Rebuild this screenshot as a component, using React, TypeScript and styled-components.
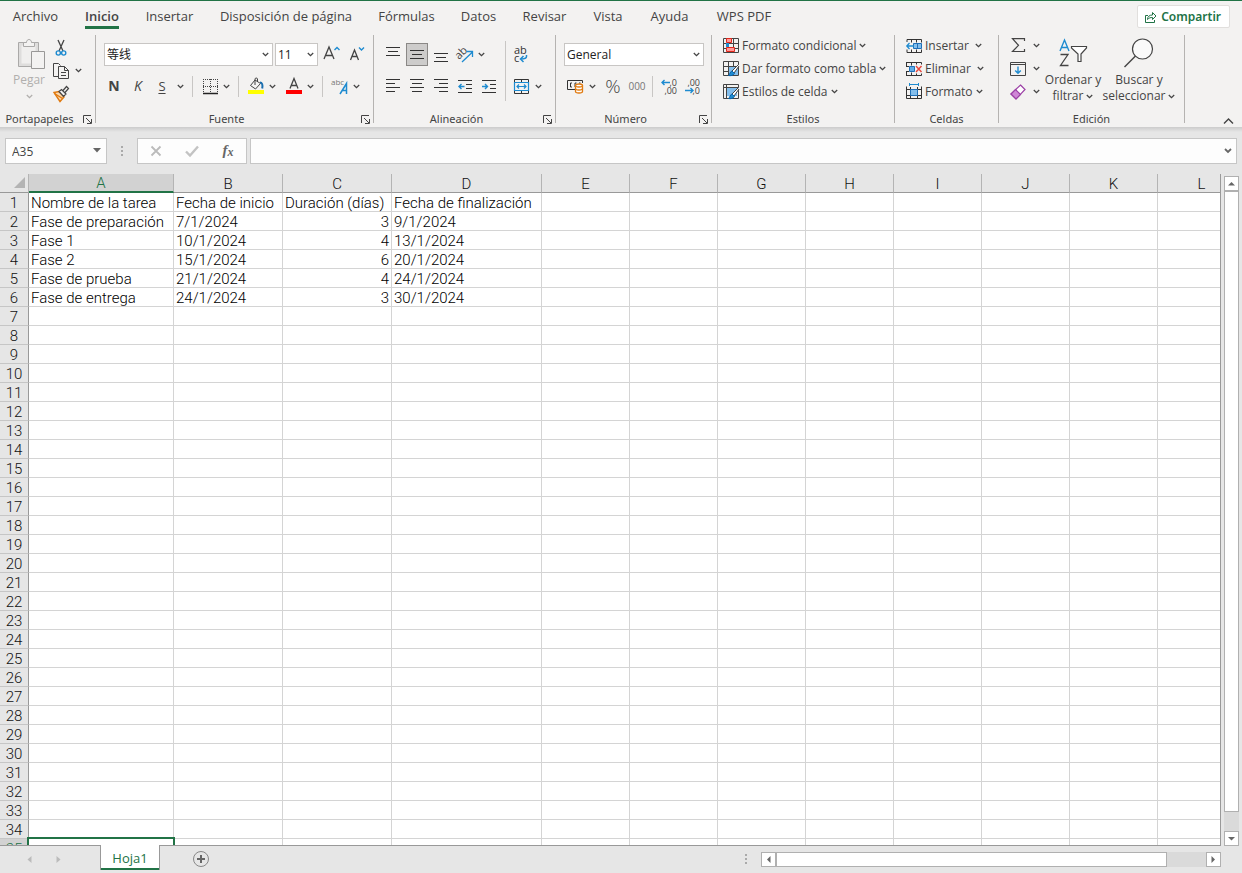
import React from 'react';
import styled, { createGlobalStyle, css } from 'styled-components';

const ui = '"Open Sans", "Noto Sans CJK SC", sans-serif';
const sheetFont = 'Roboto, "Noto Sans CJK SC", sans-serif';
const green = '#217346';
const ink = '#444';
const blue = '#1e8bd0';

const Global = createGlobalStyle`
  *, *::before, *::after { box-sizing: border-box; }
  body { margin: 0; background: #e6e6e6; font-family: ${ui}; }
  button, input, select { font: inherit; color: inherit; margin: 0; }
  svg { flex: none; overflow: visible; }
`;

const Shell = styled.div`
  display: flex;
  flex-direction: column;
  height: 100vh;
  overflow: hidden;
  border-top: 1px solid ${green};
  background: #e6e6e6;
  color: ${ink};
  font-size: 12px;
`;

/* ---------- tabs ---------- */
const TabBar = styled.nav`
  display: flex;
  height: 31px;
  flex: none;
  background: #f3f2f1;
`;
const Tab = styled.button<{ $w: number; $on?: boolean }>`
  display: flex;
  justify-content: center;
  align-items: flex-start;
  width: ${p => p.$w}px;
  padding: 6px 0 0;
  border: 0;
  background: none;
  white-space: nowrap;
  font-size: 13px;
  font-weight: ${p => (p.$on ? 600 : 400)};
  span {
    line-height: 19px;
    border-bottom: 3px solid ${p => (p.$on ? green : 'transparent')};
  }
`;
const Share = styled.button`
  display: flex;
  align-items: center;
  gap: 4px;
  height: 23px;
  margin: 4px 12px 0 auto;
  padding: 0 8px 0 7px;
  border: 1px solid #e1dfdd;
  border-radius: 2px;
  background: #fff;
  color: ${green};
  font-family: "Noto Sans", sans-serif;
  font-weight: 600;
`;

/* ---------- ribbon ---------- */
const Ribbon = styled.div`
  display: flex;
  flex: none;
  height: 95px;
  background: #f3f2f1;
`;
const RibbonShadow = styled.div`
  flex: none;
  height: 5px;
  background: linear-gradient(#cbcbcb, #e6e6e6);
`;
const GroupBox = styled.section<{ $w: number }>`
  display: flex;
  flex-direction: column;
  width: ${p => p.$w}px;
  flex: none;
`;
const GroupBody = styled.div`
  display: flex;
  height: 79px;
`;
const GroupFoot = styled.div`
  display: flex;
  align-items: center;
  height: 16px;
  font-family: "Noto Sans", sans-serif;
  font-size: 11px;
  line-height: 16px;
  white-space: nowrap;
`;
const GroupLabel = styled.span`
  flex: 1;
  text-align: center;
`;
const Divider = styled.span`
  flex: none;
  width: 1px;
  margin: 3px 0 4px;
  background: #b5b3b1;
`;
const Sep = styled.span<{ $tall?: boolean }>`
  flex: none;
  width: 1px;
  height: ${p => (p.$tall ? 60 : 21)}px;
  margin: ${p => (p.$tall ? '9px 4px 0' : '0 7px 0 6px')};
  background: #c8c6c4;
`;
const IconButton = styled.button<{ $w?: number; $on?: boolean }>`
  display: flex;
  flex: none;
  align-items: center;
  justify-content: center;
  width: ${p => p.$w ?? 24}px;
  height: 23px;
  padding: 0;
  border: 0;
  background: none;
  ${p => p.$on && css`
    width: 22px;
    margin: 0 1px;
    border: 1px solid #8a8886;
    background: #cdcccb;
  `}
`;
const Stack = styled.div<{ $pad?: string; $gap?: number }>`
  display: flex;
  flex-direction: column;
  gap: ${p => p.$gap ?? 9}px;
  padding: ${p => p.$pad ?? '11px 0 0'};
`;
const Row = styled.div<{ $gap?: number }>`
  display: flex;
  align-items: center;
  gap: ${p => p.$gap ?? 0}px;
  height: 23px;
`;
const FontRow = styled(Row)`
  padding-left: 2px;
`;
const SplitPair = styled.span<{ $gap?: boolean }>`
  display: flex;
  margin-left: ${p => (p.$gap ? 6 : 0)}px;
`;
const TextButton = styled.button<{ $gap?: number }>`
  display: flex;
  align-items: center;
  height: 23px;
  gap: 3px;
  padding: 0;
  border: 0;
  background: none;
  white-space: nowrap;
  font-size: 12px;
  svg:last-child { margin-left: ${p => p.$gap ?? 0}px; }
`;
const BigButton = styled.button<{ $w: number; $dim?: boolean }>`
  display: flex;
  flex-direction: column;
  align-items: center;
  width: ${p => p.$w}px;
  padding: 6px 0 0;
  border: 0;
  background: none;
  line-height: 16px;
  white-space: nowrap;
  color: ${p => (p.$dim ? '#b1afad' : ink)};
  > svg { margin-bottom: ${p => (p.$dim ? 2 : 4)}px; }
  span { display: flex; align-items: center; gap: 3px; min-height: 16px; }
`;
const Combo = styled.span<{ $w: number }>`
  display: grid;
  align-items: center;
  width: ${p => p.$w}px;
  height: 23px;
  border: 1px solid #c8c6c4;
  background: #fff;
  color: #222;
  > * { grid-area: 1 / 1; }
  svg { justify-self: end; margin-right: 3px; pointer-events: none; }
`;
const Select = styled.select`
  appearance: none;
  width: 100%;
  height: 21px;
  padding: 0 0 0 2px;
  border: 0;
  background: transparent;
  font-size: 12px;
`;
const Letter = styled.span<{ $kind: 'b' | 'i' | 'u' | 'pct' | 'zeros' }>`
  padding-bottom: 2px;
  ${p => p.$kind === 'b' && 'font-weight: 700; font-size: 14px;'}
  ${p => p.$kind === 'i' && 'font-style: italic; font-size: 14px;'}
  ${p => p.$kind === 'u' && 'text-decoration: underline; text-underline-offset: 2px; font-size: 13px;'}
  ${p => p.$kind === 'pct' && 'font-size: 19px; font-weight: 300;'}
  ${p => p.$kind === 'zeros' && 'font-size: 10px; color: #777;'}
`;
const Collapse = styled.button`
  display: flex;
  margin: auto 8px 2px auto;
  padding: 0;
  border: 0;
  background: none;
`;

/* ---------- formula bar ---------- */
const FormulaBar = styled.div`
  display: flex;
  flex: none;
  height: 42px;
  padding: 6px 5px 10px;
`;
const Field = styled.div<{ $w?: number; $ml?: number }>`
  display: flex;
  align-items: center;
  ${p => (p.$w ? `width: ${p.$w}px; flex: none;` : 'flex: 1; min-width: 0;')}
  margin-left: ${p => p.$ml ?? 0}px;
  border: 1px solid #c6c6c6;
  background: #fdfdfd;
`;
const TextInput = styled.input`
  flex: 1;
  min-width: 0;
  height: 24px;
  padding: 0 6px;
  border: 0;
  background: transparent;
  font-size: 12px;
`;
const FieldButton = styled.button<{ $w: number }>`
  display: flex;
  justify-content: center;
  align-items: center;
  width: ${p => p.$w}px;
  height: 24px;
  padding: 0;
  border: 0;
  background: none;
`;
const Fx = styled.i`
  font: italic bold 15px "Liberation Serif", serif;
  color: #666;
  sub { font-size: 12px; vertical-align: -1px; }
`;
const Grip = styled.span`
  display: flex;
  flex-direction: column;
  align-self: center;
  gap: 2px;
  i { width: 2px; height: 2px; background: #aaa; }
`;
const GripSlot = styled.span`
  display: flex;
  justify-content: center;
  flex: none;
  width: 30px;
`;

/* ---------- sheet ---------- */
const Work = styled.main`
  display: flex;
  flex: 1;
  min-height: 0;
`;
const SheetView = styled.div`
  flex: 1;
  min-width: 0;
  overflow: hidden;
  border-right: 1px solid #999;
  border-bottom: 1px solid #999;
`;
const Grid = styled.table`
  width: max(100%, 1246px);
  table-layout: fixed;
  border-collapse: separate;
  border-spacing: 0;
  background: #fff;
  color: #000;
  font-family: ${sheetFont};
  font-size: 15px;
  font-weight: 300;
  line-height: 16px;
`;
const ColHead = styled.th<{ $on?: boolean }>`
  height: 19px;
  padding: ${p => (p.$on ? '2px 0 0' : '3px 0 0')};
  border-right: 1px solid #b4b4b4;
  border-bottom: ${p => (p.$on ? `2px solid ${green}` : '1px solid #999')};
  background: ${p => (p.$on ? '#d2d2d2' : '#e6e6e6')};
  color: ${p => (p.$on ? green : '#111')};
  font-weight: 300;
  line-height: 15px;
`;
const Corner = styled.th`
  padding: 0 3px 2px 0;
  border-right: 1px solid #b4b4b4;
  border-bottom: 1px solid #999;
  background: #e6e6e6;
  text-align: right;
  svg { display: block; margin-left: auto; }
`;
const RowHead = styled.th<{ $on?: boolean }>`
  height: 19px;
  padding: 2px 0 0;
  border-right: 1px solid #999;
  border-bottom: 1px solid #c6c6c6;
  background: ${p => (p.$on ? '#d2d2d2' : '#e6e6e6')};
  color: ${p => (p.$on ? green : '#111')};
  font-weight: 300;
`;
const Cell = styled.td<{ $right?: boolean; $active?: boolean }>`
  height: 19px;
  padding: 2px 2px 0;
  border-right: 1px solid #d4d4d4;
  border-bottom: 1px solid #d4d4d4;
  text-align: ${p => (p.$right ? 'right' : 'left')};
  white-space: nowrap;
  ${p => p.$active && css`
    position: relative;
    &::after {
      content: '';
      position: absolute;
      inset: -2px;
      border: 2px solid ${green};
    }
  `}
`;

/* ---------- scroll bars ---------- */
const VScroll = styled.div`
  display: flex;
  flex-direction: column;
  flex: none;
  width: 15px;
  margin: 2px 3px 0;
  background: #dadada;
`;
const ScrollButton = styled.button`
  display: flex;
  flex: none;
  align-items: center;
  justify-content: center;
  width: 15px;
  height: 15px;
  padding: 0;
  border: 1px solid #b0b0b0;
  background: #fff;
`;
const Thumb = styled.div<{ $grow: number }>`
  flex: ${p => p.$grow};
  border: 1px solid #b0b0b0;
  background: #fff;
`;
const Track = styled.div<{ $grow: number }>`
  flex: ${p => p.$grow};
`;
const BottomBar = styled.footer`
  display: flex;
  flex: none;
  align-items: flex-start;
  height: 27px;
`;
const SheetNav = styled.div`
  display: flex;
  justify-content: flex-end;
  width: 100px;
  padding: 6px 34px 0 0;
  gap: 13px;
`;
const PlainButton = styled.button`
  display: flex;
  align-items: center;
  justify-content: center;
  width: 16px;
  height: 14px;
  padding: 0;
  border: 0;
  background: none;
`;
const SheetTab = styled.button`
  position: relative;
  width: 60px;
  height: 25px;
  margin-top: -1px;
  padding: 0;
  border: solid #999;
  border-width: 0 1px;
  background: #fff;
  box-shadow: inset 0 -2px ${green};
  color: ${green};
  font-size: 13px;
  line-height: 26px;
`;
const AddSheet = styled(PlainButton)`
  width: 18px;
  height: 18px;
  margin: 4px 0 0 32px;
`;
const HScroll = styled.div`
  display: flex;
  width: 37%;
  height: 15px;
  margin: 6px 21px 0 14px;
  background: #dadada;
`;
const BarGrip = styled(Grip)`
  align-self: flex-start;
  margin: 8px 0 0 auto;
`;

/* ---------- icons ---------- */
const Svg = ({ w, h, children }: { w: number; h: number; children: React.ReactNode }) => (
  <svg width={w} height={h} viewBox={`0 0 ${w} ${h}`} fill="none" stroke={ink} aria-hidden="true">
    {children}
  </svg>
);
const Chev = ({ c = ink }: { c?: string }) => (
  <Svg w={7} h={5}><path d="M.8 1l2.7 2.6L6.2 1" stroke={c} strokeWidth="1.3" /></Svg>
);
const Launcher = () => (
  <Svg w={9} h={9}><path d="M.5 8V.5H8M3 3l5 5M8.500 4v4.500H4" /></Svg>
);
const Paste = () => (
  <Svg w={34} h={32}>
    <g transform="translate(4 0)">
      <path d="M2.500 4.500h20v24h-20z" fill="#dedddc" stroke="#aaa9a8" />
      <path d="M5.500 7.500h14v18h-14z" fill="#f0efee" stroke="none" />
      <path d="M7.500 8.500v-4h3c0-4 5-4 5 0h3v4z" fill="#f3f2f1" stroke="#aaa9a8" />
      <path d="M15.500 13.500h13v17h-13z" fill="#f3f2f1" stroke="#999897" />
    </g>
  </Svg>
);
const Scissors = () => (
  <Svg w={14} h={18}>
    <path d="M4 1l5 11M10 1L5 12" strokeWidth="1.300" />
    <circle cx="4.300" cy="14" r="2.100" stroke={blue} strokeWidth="1.400" />
    <circle cx="9.700" cy="14" r="2.100" stroke={blue} strokeWidth="1.400" />
  </Svg>
);
const Copy = () => (
  <Svg w={18} h={18}>
    <path d="M6 14.500H1.500v-13h5l2 2" />
    <path d="M6.500 4.500h6l4 4v8h-10zM12.500 4.500v4h4M9 10.500h5M9 13.500h5" />
  </Svg>
);
const Brush = () => (
  <Svg w={18} h={18}>
    <path d="M2 7.500l5-1 5 5.500-4 4.500z" fill="#fbd9b0" stroke="#e07a10" strokeWidth="1.400" />
    <path d="M2.500 8.500l8 5" stroke="#e07a10" strokeWidth="1.400" />
    <path d="M7 6.500l2.500-2 4.500 4.500-2.500 2.500zM11 5.500l3.500-4 2 2-3.500 4" fill="#f3f2f1" strokeWidth="1.200" />
  </Svg>
);
const GrowFont = ({ down }: { down?: boolean }) => (
  <Svg w={18} h={18}>
    {down
      ? <><path d="M.5 14L4.500 4 8.500 14M2 10.500h5" strokeWidth="1.300" /><path d="M9 1.500L11.500 4 14 1.500" stroke={blue} strokeWidth="1.400" /></>
      : <><path d="M0 13L5 1l5 12M2 9.500h6" strokeWidth="1.300" /><path d="M10.500 4L13 1.500 15.500 4" stroke={blue} strokeWidth="1.400" /></>}
  </Svg>
);
const Borders = () => (
  <Svg w={15} h={16}>
    <path d="M.5 0v14M7.500 0v14M14.500 0v14M0 .5h15M0 7.500h15" strokeDasharray="1 1" />
    <path d="M0 14.500h15" stroke="#222" strokeWidth="1.500" />
  </Svg>
);
const Bucket = () => (
  <Svg w={16} h={17}>
    <path d="M7 2L2.500 7.500 7.500 11l5-5.500L7 2zM7 7V1c0-1.300 2.500-1.300 2.500 0v3" />
    <path d="M12 4.500c2 0 3 2 2.200 6" stroke="#1a6fb0" strokeWidth="2" />
    <path d="M0 12h16v4H0z" fill="#ff0" stroke="none" />
  </Svg>
);
const FontColor = () => (
  <Svg w={16} h={17}>
    <path d="M4 10.500L8 .5l4 10M5.300 7.500h5.400" strokeWidth="1.300" />
    <path d="M0 12h16v4H0z" fill="#f00" stroke="none" />
  </Svg>
);
const Phonetic = () => (
  <Svg w={18} h={18}>
    <text x="0" y="7" fontSize="8" fill="#777" stroke="none">abc</text>
    <path d="M9 16L15.500 5.500V16M11.500 12.500h4" stroke={blue} strokeWidth="1.500" />
  </Svg>
);
const Lines = ({ d }: { d: string }) => <Svg w={14} h={15}><path d={d} stroke="#333" /></Svg>;
const Orient = () => (
  <Svg w={16} h={18}>
    <text x="0" y="11" fontSize="11" fill={ink} stroke="none" transform="rotate(-45 5 9)">ab</text>
    <path d="M6 16L16 6.500M10.500 5.500h6V11" stroke={blue} strokeWidth="1.300" />
  </Svg>
);
const Wrap = () => (
  <Svg w={14} h={18}>
    <text fontSize="11" fill="#333" stroke="none">
      <tspan x="0" y="8">ab</tspan>
      <tspan x="0" y="16">c</tspan>
    </text>
    <path d="M12.500 9v1.500c0 2-2 2.500-6 2.500M9.500 10l-3 3 3 3" stroke={blue} strokeWidth="1.500" />
  </Svg>
);
const Indent = ({ right }: { right?: boolean }) => (
  <Svg w={15} h={15}>
    <path d="M0 1.500h14M8 5.500h6M8 9.500h6M0 13.500h14" stroke="#333" />
    <path d={right ? 'M0 7.500h5M3 5l2.500 2.500L3 10' : 'M1 7.500h5.500M3.500 5L1 7.500 3.500 10'} stroke={blue} strokeWidth="1.400" />
  </Svg>
);
const Merge = () => (
  <Svg w={15} h={15}>
    <path d="M.5 3.500v-3h14v3M.5 11.500v3h14v-3M7.500 0v3M7.500 12v3" stroke="#333" />
    <path d="M.5 3.500h14v8H.5zM3 7.500h9M5 5.500l-2 2 2 2M10 5.500l2 2-2 2" stroke={blue} strokeWidth="1.200" />
  </Svg>
);
const Currency = () => (
  <Svg w={17} h={15}>
    <path d="M8 10.500H.5v-9h15V4M5 4H3.500v4H5M8 8V4h1.500M12 4h1.500" stroke="#333" />
    <path d="M8.500 6.500v6c0 2 7 2 7 0v-6" fill="#fff" stroke="#e07a10" strokeWidth="1.300" />
    <ellipse cx="12" cy="6.500" rx="3.500" ry="1.500" fill="#fff" stroke="#e07a10" strokeWidth="1.300" />
    <path d="M8.500 9.500c0 2 7 2 7 0" stroke="#e07a10" strokeWidth="1.300" />
  </Svg>
);
const Decimals = ({ less }: { less?: boolean }) => (
  <Svg w={17} h={18}>
    <text fontSize="9" fill={ink} stroke="none" textAnchor="end">
      <tspan x="15" y="8">{less ? ',00' : ',0'}</tspan>
      <tspan x="15" y="16">{less ? ',0' : ',00'}</tspan>
    </text>
    <path d={less ? 'M0 12.500h8M5.500 10L8 12.500 5.500 15' : 'M0 4.500h8M2.500 2L0 4.500 2.500 7'} stroke={blue} strokeWidth="1.400" />
  </Svg>
);
const GridLines = () => <path d="M.5.5h15v14H.5zM.5 5.500h15M.5 10.500h15M5.500.5v14M10.500.5v14" stroke="#444" />;
const CondFormat = () => (
  <Svg w={16} h={15}>
    <GridLines />
    <path d="M3.500.5h5v4h-5zM3.500 9.500h8v4h-8z" fill="#ff9a9a" stroke="#e0281c" />
    <path d="M3 5h3v4H3z" fill={blue} stroke="none" />
  </Svg>
);
const BrushOver = () => (
  <>
    <path d="M15.500 3.500L9 10l2 2 5-7" fill="#fff" stroke="#444" />
    <path d="M9 10l2.500 2.500c-1 2-4 2.500-6 2 1.500-1 1.500-4 3.500-4.500z" fill={blue} stroke="#0a63a8" />
  </>
);
const TableFormat = () => (
  <Svg w={16} h={15}>
    <path d="M.5.5h15v14H.5zM.5 5.500h15M.5 10.500h5M5.500.5v14M10.500.5v5" stroke="#444" />
    <path d="M6 6h9v8H6z" fill="#83beec" stroke="none" />
    <BrushOver />
  </Svg>
);
const CellStyle = () => (
  <Svg w={16} h={15}>
    <path d="M.5.5h15v14H.5zM.5 3.500h15M3.500.5v14" stroke="#444" />
    <path d="M4 4h10v8H4z" fill="#83beec" stroke="none" />
    <BrushOver />
  </Svg>
);
const InsertCells = () => (
  <Svg w={16} h={14}>
    <path d="M1 3V.5h14.500v3M1 10.500v3h14.500v-3M5.500.5v3M10.500.5v3M5.500 10.500v3M10.500 10.500v3" stroke="#333" />
    <path d="M7.500 4.500h8v5h-8zM11.500 4.500v5" fill="#83beec" stroke="#1e6fb8" />
    <path d="M.8 7H8M3.500 4L.8 7l2.700 3" stroke={blue} strokeWidth="1.300" />
  </Svg>
);
const DeleteCells = () => (
  <Svg w={16} h={14}>
    <path d="M0 .5h15.500v2M0 13.500h15.500v-2M5.500.5v3M10.500.5v2M5.500 10.500v3M10.500 11.500v2M0 4.500h3M0 9.500h3M.5.5v4M.5 9.500v4" stroke="#333" />
    <path d="M3.500 4.500h5v5h-5z" fill="#5fabe6" stroke="#1e6fb8" />
    <path d="M10 4l5.500 6M15.500 4L10 10" stroke="#e8453a" strokeWidth="1.400" />
  </Svg>
);
const FormatCells = () => (
  <Svg w={16} h={17}>
    <path d="M.5 3.500v12h15v-12M.5 6.500h15M4.500 4v11.500M11.500 4v11.500M.5 12.500h15" stroke="#333" />
    <path d="M4.500 6.500h7v6h-7z" fill="#83beec" stroke="#1e6fb8" />
    <path d="M3.500 1.500h9M3.500 0v3M12.500 0v3" stroke={blue} />
  </Svg>
);
const Sigma = () => (
  <Svg w={15} h={15}><path d="M13.500 3V.7H1.500l6 6.600-6 6.200h12V11" strokeWidth="1.200" /></Svg>
);
const Fill = () => (
  <Svg w={16} h={14}>
    <path d="M.5.5h15v13H.5zM.5 2.500h15" />
    <path d="M8 4.500V11M5.200 8.500L8 11.200l2.800-2.700" stroke={blue} strokeWidth="1.400" />
  </Svg>
);
const Eraser = () => (
  <Svg w={16} h={16}>
    <path d="M10.500 1l4.500 4.500L6 15l-5-5z" fill="#fff" stroke="#9b3fa5" strokeWidth="1.200" />
    <path d="M5.500 5.500l5 5L6 15l-5-5z" fill="#cf86d6" stroke="#9b3fa5" strokeWidth="1.200" />
  </Svg>
);
const SortFilter = () => (
  <Svg w={30} h={30}>
    <path d="M2 13L6.500 2 11 13M3.500 9.500h6" stroke={blue} strokeWidth="1.400" />
    <path d="M2.500 16.500h7.500L2.500 27.500h8" strokeWidth="1.300" />
    <path d="M13.500 8.500h15v1.500l-5.500 6v7.500h-3v-7.500l-6.500-6z" fill="#fff" strokeWidth="1.200" />
  </Svg>
);
const Find = () => (
  <Svg w={30} h={30}>
    <circle cx="18.500" cy="11" r="10" fill="#fafafa" strokeWidth="1.200" />
    <path d="M11.500 18L.5 29" strokeWidth="1.400" />
  </Svg>
);
const ShareIcon = () => (
  <Svg w={12} h={12}>
    <path d="M3 4.500H.5v7h9V9M2.500 8.500c0-3 2-4.500 5-4.500V1.500L11 5 7.500 8.500V6.500c-2 0-3.500.3-5 2z" stroke={green} />
  </Svg>
);
const Tri = ({ d, c = '#666', w = 7, h = 7 }: { d: string; c?: string; w?: number; h?: number }) => (
  <Svg w={w} h={h}><path d={d} fill={c} stroke="none" /></Svg>
);

/* ---------- pieces ---------- */
const Group = ({ w, label, launcher, children }: { w: number; label: string; launcher?: boolean; children: React.ReactNode }) => (
  <>
    <GroupBox $w={w} aria-label={label}>
      <GroupBody>{children}</GroupBody>
      <GroupFoot>
        <GroupLabel>{label}</GroupLabel>
        {launcher && <IconButton $w={16} aria-label={`Opciones de ${label}`}><Launcher /></IconButton>}
      </GroupFoot>
    </GroupBox>
    <Divider />
  </>
);
const Drop = ({ label }: { label: string }) => (
  <IconButton $w={12} aria-label={label}><Chev /></IconButton>
);
const Split = ({ label, gap, children }: { label: string; gap?: boolean; children: React.ReactNode }) => (
  <SplitPair $gap={gap}>
    <IconButton $w={20} aria-label={label}>{children}</IconButton>
    <Drop label={`Más opciones de ${label}`} />
  </SplitPair>
);

const tabs: [string, number][] = [
  ['Archivo', 71], ['Inicio', 62], ['Insertar', 73], ['Disposición de página', 160], ['Fórmulas', 81],
  ['Datos', 63], ['Revisar', 69], ['Vista', 58], ['Ayuda', 65], ['WPS PDF', 84],
];
const columns: [string, number | undefined][] = [
  ['A', 145], ['B', 109], ['C', 109], ['D', 150], ['E', 88], ['F', 88], ['G', 88],
  ['H', 88], ['I', 88], ['J', 88], ['K', 88], ['L', undefined],
];
const data = [
  ['Nombre de la tarea', 'Fecha de inicio', 'Duración (días)', 'Fecha de finalización'],
  ['Fase de preparación', '7/1/2024', '3', '9/1/2024'],
  ['Fase 1', '10/1/2024', '4', '13/1/2024'],
  ['Fase 2', '15/1/2024', '6', '20/1/2024'],
  ['Fase de prueba', '21/1/2024', '4', '24/1/2024'],
  ['Fase de entrega', '24/1/2024', '3', '30/1/2024'],
];
const rows = Array.from({ length: 35 }, (_, i) => i + 1);

export default function App() {
  return (
    <Shell>
      <Global />
      <TabBar>
        {tabs.map(([name, w]) => (
          <Tab key={name} $w={w} $on={name === 'Inicio'}><span>{name}</span></Tab>
        ))}
        <Share><ShareIcon />Compartir</Share>
      </TabBar>

      <Ribbon>
        <Group w={95} label="Portapapeles" launcher>
          <BigButton $w={58} $dim>
            <Paste />
            <span>Pegar</span>
            <span><Chev c="#b1afad" /></span>
          </BigButton>
          <Stack $gap={0} $pad="4px 0 0">
            <Row><IconButton $w={6} aria-label="Cortar"><Scissors /></IconButton></Row>
            <Row><IconButton $w={6} aria-label="Copiar"><Copy /></IconButton><IconButton $w={28} aria-label="Más opciones de copia"><Chev /></IconButton></Row>
            <Row><IconButton $w={6} aria-label="Copiar formato"><Brush /></IconButton></Row>
          </Stack>
        </Group>

        <Group w={277} label="Fuente" launcher>
          <Stack $pad="11px 0 0 6px">
            <FontRow $gap={2}>
              <Combo $w={169}><Select aria-label="Fuente" defaultValue="等线"><option>等线</option></Select><Chev /></Combo>
              <Combo $w={43}><Select aria-label="Tamaño de fuente" defaultValue="11"><option>11</option></Select><Chev /></Combo>
              <IconButton $w={26} aria-label="Aumentar tamaño"><GrowFont /></IconButton>
              <IconButton $w={22} aria-label="Disminuir tamaño"><GrowFont down /></IconButton>
            </FontRow>
            <Row>
              <IconButton aria-label="Negrita"><Letter $kind="b">N</Letter></IconButton>
              <IconButton aria-label="Cursiva"><Letter $kind="i">K</Letter></IconButton>
              <IconButton aria-label="Subrayado"><Letter $kind="u">S</Letter></IconButton>
              <Drop label="Tipos de subrayado" />
              <Sep />
              <Split label="Bordes"><Borders /></Split>
              <Sep />
              <Split label="Color de relleno"><Bucket /></Split>
              <Split label="Color de fuente" gap><FontColor /></Split>
              <Sep />
              <Split label="Guía fonética"><Phonetic /></Split>
            </Row>
          </Stack>
        </Group>

        <Group w={181} label="Alineación" launcher>
          <Stack $pad="11px 0 0 7px">
            <Row>
              <IconButton aria-label="Alinear arriba"><Lines d="M0 .5h14M2 4.500h10M0 8.500h14" /></IconButton>
              <IconButton $on aria-label="Alinear en el medio"><Lines d="M0 3.500h14M2 7.500h10M0 11.500h14" /></IconButton>
              <IconButton aria-label="Alinear abajo"><Lines d="M0 6.500h14M2 10.500h10M0 14.500h14" /></IconButton>
              <IconButton $w={22} aria-label="Orientación"><Orient /></IconButton>
              <Drop label="Más orientación" />
            </Row>
            <Row>
              <IconButton aria-label="Alinear a la izquierda"><Lines d="M0 .5h14M0 4.500h9M0 8.500h14M0 12.500h9" /></IconButton>
              <IconButton aria-label="Centrar"><Lines d="M0 .5h14M2 4.500h10M0 8.500h14M2 12.500h10" /></IconButton>
              <IconButton aria-label="Alinear a la derecha"><Lines d="M0 .5h14M5 4.500h9M0 8.500h14M5 12.500h9" /></IconButton>
              <IconButton aria-label="Disminuir sangría"><Indent /></IconButton>
              <IconButton aria-label="Aumentar sangría"><Indent right /></IconButton>
            </Row>
          </Stack>
          <Sep $tall />
          <Stack>
            <Row><IconButton $w={22} aria-label="Ajustar texto"><Wrap /></IconButton></Row>
            <Row><IconButton $w={22} aria-label="Combinar y centrar"><Merge /></IconButton><Drop label="Más opciones de combinar" /></Row>
          </Stack>
        </Group>

        <Group w={155} label="Número" launcher>
          <Stack $pad="11px 0 0 8px">
            <Row>
              <Combo $w={140}><Select aria-label="Formato de número" defaultValue="General"><option>General</option></Select><Chev /></Combo>
            </Row>
            <Row>
              <IconButton $w={22} aria-label="Moneda"><Currency /></IconButton>
              <Drop label="Más monedas" />
              <IconButton $w={30} aria-label="Porcentaje"><Letter $kind="pct">%</Letter></IconButton>
              <IconButton $w={18} aria-label="Millares"><Letter $kind="zeros">000</Letter></IconButton>
              <Sep />
              <IconButton $w={20} aria-label="Aumentar decimales"><Decimals /></IconButton>
              <IconButton $w={26} aria-label="Disminuir decimales"><Decimals less /></IconButton>
            </Row>
          </Stack>
        </Group>

        <Group w={182} label="Estilos">
          <Stack $gap={0} $pad="2px 0 0 11px">
            <TextButton><CondFormat />Formato condicional<Chev /></TextButton>
            <TextButton><TableFormat />Dar formato como tabla<Chev /></TextButton>
            <TextButton><CellStyle />Estilos de celda<Chev /></TextButton>
          </Stack>
        </Group>

        <Group w={103} label="Celdas">
          <Stack $gap={0} $pad="2px 0 0 11px">
            <TextButton $gap={3}><InsertCells />Insertar<Chev /></TextButton>
            <TextButton $gap={3}><DeleteCells />Eliminar<Chev /></TextButton>
            <TextButton><FormatCells />Formato<Chev /></TextButton>
          </Stack>
        </Group>

        <Group w={185} label="Edición">
          <Stack $gap={0} $pad="2px 0 0 7px">
            <Row><IconButton aria-label="Autosuma"><Sigma /></IconButton><Drop label="Más funciones" /></Row>
            <Row><IconButton aria-label="Rellenar"><Fill /></IconButton><Drop label="Más relleno" /></Row>
            <Row><IconButton aria-label="Borrar"><Eraser /></IconButton><Drop label="Más borrado" /></Row>
          </Stack>
          <BigButton $w={62}>
            <SortFilter />
            <span>Ordenar y</span>
            <span>filtrar<Chev /></span>
          </BigButton>
          <BigButton $w={70}>
            <Find />
            <span>Buscar y</span>
            <span>seleccionar<Chev /></span>
          </BigButton>
        </Group>
        <Collapse aria-label="Contraer la cinta">
          <Svg w={11} h={8}><path d="M1 6.500L5.500 2 10 6.500" strokeWidth="1.400" /></Svg>
        </Collapse>
      </Ribbon>
      <RibbonShadow />

      <FormulaBar>
        <Field $w={102}>
          <TextInput aria-label="Cuadro de nombres" defaultValue="A35" />
          <FieldButton $w={19} aria-label="Nombres"><Tri d="M0 0h8L4 4.500z" w={8} h={7} /></FieldButton>
        </Field>
        <GripSlot><Grip><i /><i /><i /></Grip></GripSlot>
        <Field $w={110}>
          <FieldButton $w={36} aria-label="Cancelar"><Svg w={12} h={12}><path d="M1.500 1.500l9 9M10.500 1.500l-9 9" stroke="#bbb" strokeWidth="1.800" /></Svg></FieldButton>
          <FieldButton $w={36} aria-label="Introducir"><Svg w={14} h={12}><path d="M1 6.500l4 4 8-9" stroke="#c3c3c3" strokeWidth="2.400" /></Svg></FieldButton>
          <FieldButton $w={36} aria-label="Insertar función"><Fx>f<sub>x</sub></Fx></FieldButton>
        </Field>
        <Field $ml={3}>
          <TextInput aria-label="Barra de fórmulas" />
          <FieldButton $w={16} aria-label="Expandir la barra de fórmulas"><Svg w={8} h={6}><path d="M1 1l3 3 3-3" stroke="#666" strokeWidth="1.800" /></Svg></FieldButton>
        </Field>
      </FormulaBar>

      <Work>
        <SheetView>
          <Grid>
            <colgroup>
              <col style={{ width: 29 }} />
              {columns.map(([c, w]) => <col key={c} style={{ width: w }} />)}
            </colgroup>
            <thead>
              <tr>
                <Corner><Tri d="M11 0v11H0z" c="#b4b4b4" w={11} h={11} /></Corner>
                {columns.map(([c]) => <ColHead key={c} scope="col" $on={c === 'A'}>{c}</ColHead>)}
              </tr>
            </thead>
            <tbody>
              {rows.map(r => (
                <tr key={r}>
                  <RowHead scope="row" $on={r === 35}>{r}</RowHead>
                  {columns.map(([c], i) => (
                    <Cell key={c} $right={i === 2 && r > 1} $active={r === 35 && i === 0}>{data[r - 1]?.[i]}</Cell>
                  ))}
                </tr>
              ))}
            </tbody>
          </Grid>
        </SheetView>
        <VScroll>
          <ScrollButton aria-label="Subir"><Tri d="M0 5.500h7L3.500 2z" /></ScrollButton>
          <Thumb $grow={621} />
          <Track $grow={19} />
          <ScrollButton aria-label="Bajar"><Tri d="M0 2h7L3.500 5.500z" /></ScrollButton>
        </VScroll>
      </Work>

      <BottomBar>
        <SheetNav>
          <PlainButton aria-label="Hoja anterior"><Tri d="M5.500 0v7L1.500 3.500z" c="#bbb" /></PlainButton>
          <PlainButton aria-label="Hoja siguiente"><Tri d="M1.500 0v7l4-3.500z" c="#bbb" /></PlainButton>
        </SheetNav>
        <SheetTab>Hoja1</SheetTab>
        <AddSheet aria-label="Hoja nueva">
          <Svg w={18} h={18}><circle cx="9" cy="9" r="7.500" stroke="#888" /><path d="M9 5v8M5 9h8" stroke="#666" strokeWidth="2" /></Svg>
        </AddSheet>
        <BarGrip><i /><i /><i /></BarGrip>
        <HScroll>
          <ScrollButton aria-label="Izquierda"><Tri d="M5.500 0v7L2 3.500z" /></ScrollButton>
          <Thumb $grow={390} />
          <Track $grow={39} />
          <ScrollButton aria-label="Derecha"><Tri d="M1.500 0v7L5 3.500z" /></ScrollButton>
        </HScroll>
      </BottomBar>
    </Shell>
  );
}
